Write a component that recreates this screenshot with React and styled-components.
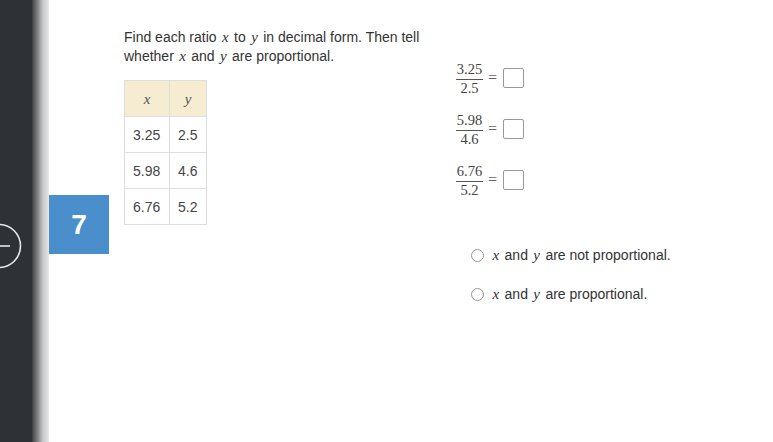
import React from 'react';
import styled, { createGlobalStyle } from 'styled-components';

const GlobalStyle = createGlobalStyle`
  html, body {
    margin: 0;
    padding: 0;
    background: #fff;
  }
  body {
    font-family: "Liberation Sans", Arial, sans-serif;
    color: #333;
  }
`;

const rows = [
  { x: '3.25', y: '2.5' },
  { x: '5.98', y: '4.6' },
  { x: '6.76', y: '5.2' },
];

const choices = ['are not proportional.', 'are proportional.'];

const App = () => {
  return (
    <>
      <GlobalStyle />
      <Page>
        <Sidebar>
          <CollapseIcon width="46" height="46" viewBox="0 0 46 46">
            <circle cx="23" cy="23" r="21.5" fill="none" stroke="#e6e6e6" strokeWidth="1.6" />
            <line x1="12" y1="23" x2="34" y2="23" stroke="#e6e6e6" strokeWidth="1.6" />
          </CollapseIcon>
        </Sidebar>
        <Shadow />
        <Main>
          <NumberBox>7</NumberBox>
          <Question>
            <Prompt>
              Find each ratio <M>x</M> to <M>y</M> in decimal form. Then tell whether{' '}
              <M>x</M> and <M>y</M> are proportional.
            </Prompt>
            <Table>
              <thead>
                <tr>
                  <Th $w={45}><M>x</M></Th>
                  <Th $w={37}><M>y</M></Th>
                </tr>
              </thead>
              <tbody>
                {rows.map((r) => (
                  <tr key={r.x}>
                    <Td>{r.x}</Td>
                    <Td>{r.y}</Td>
                  </tr>
                ))}
              </tbody>
            </Table>
          </Question>
          <Answers>
            <Fractions>
              {rows.map((r) => (
                <FractionRow key={r.x}>
                  <Frac>
                    <Num>{r.x}</Num>
                    <Den>{r.y}</Den>
                  </Frac>
                  <Equals>=</Equals>
                  <AnswerBox />
                </FractionRow>
              ))}
            </Fractions>
            <Choices>
              {choices.map((c) => (
                <Choice key={c}>
                  <Radio />
                  <span>
                    <M>x</M> and <M>y</M> {c}
                  </span>
                </Choice>
              ))}
            </Choices>
          </Answers>
        </Main>
      </Page>
    </>
  );
};

const Page = styled.div`
  display: flex;
  width: 773px;
  height: 442px;
  overflow: hidden;
`;

const Sidebar = styled.div`
  position: relative;
  flex: 0 0 32px;
  background: #2e3236;
`;

const CollapseIcon = styled.svg`
  position: absolute;
  left: -24px;
  top: 223px;
`;

const Shadow = styled.div`
  flex: 0 0 17px;
  background: linear-gradient(to right, #3b3f43 0%, #7a7c7e 30%, #c9c9c9 65%, #e6e6e6 100%);
`;

const Main = styled.div`
  flex: 1;
  display: flex;
  background: #fff;
`;

const NumberBox = styled.div`
  flex: 0 0 60px;
  height: 59px;
  margin-top: 195px;
  background: #4a8fcc;
  color: #fff;
  font-family: "Liberation Sans", Arial, sans-serif;
  font-weight: 700;
  font-size: 28px;
  display: flex;
  align-items: center;
  justify-content: center;
`;

const Question = styled.div`
  flex: 0 0 316px;
  padding: 28px 0 0 15px;
`;

const Prompt = styled.p`
  margin: 0 0 14px;
  font-size: 14px;
  line-height: 19px;
  width: 310px;
`;

const M = styled.i`
  font-family: "Liberation Serif", "Times New Roman", serif;
  font-size: 15px;
  line-height: 1;
  padding: 0 1.5px;
`;

const Table = styled.table`
  border-collapse: collapse;
  font-size: 14px;
`;

const Th = styled.th`
  width: ${({ $w }) => $w}px;
  height: 36px;
  padding: 0;
  box-sizing: border-box;
  background: #f6ecd2;
  border: 1px solid #dedede;
  font-weight: 400;
  text-align: center;
  color: #555;
`;

const Td = styled.td`
  height: 36px;
  padding: 0 0 0 8px;
  box-sizing: border-box;
  border: 1px solid #dedede;
  color: #444;
`;

const Answers = styled.div`
  padding: 59px 0 0 16px;
  display: flex;
  flex-direction: column;
`;

const Fractions = styled.div`
  display: flex;
  flex-direction: column;
  gap: 13px;
`;

const FractionRow = styled.div`
  display: flex;
  align-items: center;
  height: 38px;
`;

const Frac = styled.div`
  display: flex;
  flex-direction: column;
  align-items: center;
  font-family: "Liberation Serif", "Times New Roman", serif;
  font-size: 14.5px;
  color: #444;
  width: 27px;
`;

const Num = styled.span`
  line-height: 16px;
  padding-bottom: 2px;
`;

const Den = styled.span`
  line-height: 15px;
  padding-top: 1px;
  border-top: 1px solid #555;
  align-self: stretch;
  text-align: center;
`;

const Equals = styled.span`
  font-family: "Liberation Serif", "Times New Roman", serif;
  font-size: 16px;
  color: #666;
  margin: 0 6px 0 5px;
`;

const AnswerBox = styled.div`
  width: 19px;
  height: 18px;
  border: 1px solid #999;
  border-radius: 2px;
  background: #fff;
`;

const Choices = styled.div`
  display: flex;
  flex-direction: column;
  gap: 19px;
  margin-top: 46px;
  padding-left: 15px;
`;

const Choice = styled.label`
  display: flex;
  align-items: center;
  gap: 7px;
  font-size: 14px;
  line-height: 20px;
  color: #333;
`;

const Radio = styled.span`
  width: 11px;
  height: 11px;
  border: 1px solid #999;
  border-radius: 50%;
  background: #fff;
`;

export default App;
